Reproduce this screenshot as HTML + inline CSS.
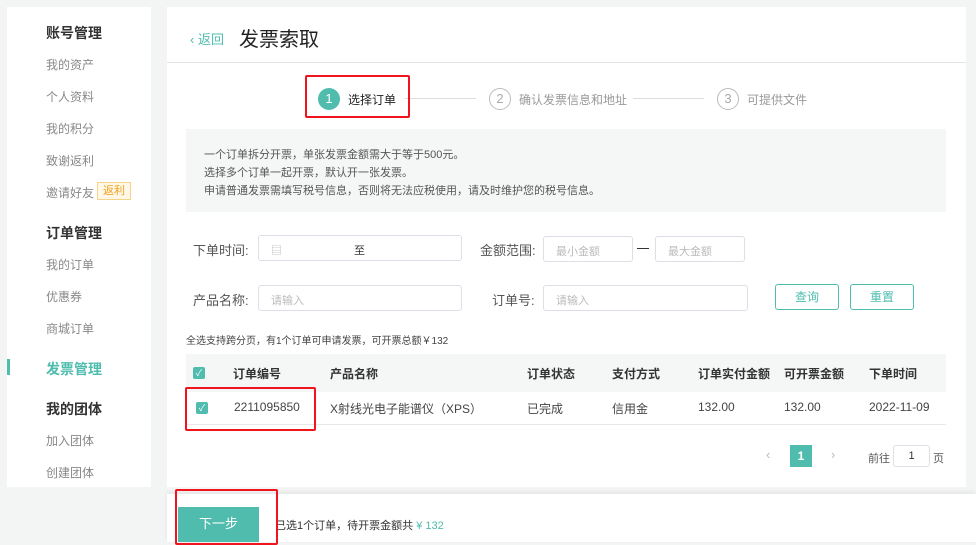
<!DOCTYPE html>
<html><head><meta charset="utf-8"><style>
*{margin:0;padding:0;box-sizing:border-box}
body{width:976px;height:542px;background:#f3f4f4;font-family:"Liberation Sans","Noto Sans CJK SC",sans-serif;position:relative;overflow:hidden;color:#333}
.a{position:absolute;white-space:nowrap}
.side{left:7px;top:7px;width:144px;height:480px;background:#fff}
.main{left:167px;top:7px;width:799px;height:480px;background:#fff}
.h{font-size:14px;font-weight:bold;color:#333}
.s{font-size:12px;color:#888}
.inp{position:absolute;border:1px solid #dcdfe6;border-radius:3px;height:26px;background:#fff;font-size:11px;color:#bbb;padding:6px 12px}
.lbl{font-size:13px;color:#555}
.btn{position:absolute;border:1px solid #4fbcae;color:#4fbcae;border-radius:3px;font-size:12px;text-align:center;line-height:24px;height:26px;width:64px}
.red{position:absolute;border:2px solid #f0141e;border-radius:2px}
.cb{position:absolute;width:12px;height:12px;background:#4fbcae;border-radius:2px;color:#fff;font-size:9px;line-height:12px;text-align:center}
.th{font-size:12px;color:#333;font-weight:bold}
.td{font-size:12px;color:#444}
</style></head><body>
<div class="a side"></div>
<div class="a h" style="left:46px;top:23px">账号管理</div>
<div class="a s" style="left:46px;top:56px">我的资产</div>
<div class="a s" style="left:46px;top:88px">个人资料</div>
<div class="a s" style="left:46px;top:120px">我的积分</div>
<div class="a s" style="left:46px;top:152px">致谢返利</div>
<div class="a s" style="left:46px;top:184px">邀请好友</div>
<div class="a" style="left:97px;top:182px;width:34px;height:18px;border:1px solid #f5d48a;background:#fff8e6;color:#f0a020;font-size:11px;text-align:center;line-height:16px">返利</div>
<div class="a h" style="left:46px;top:223px">订单管理</div>
<div class="a s" style="left:46px;top:256px">我的订单</div>
<div class="a s" style="left:46px;top:288px">优惠券</div>
<div class="a s" style="left:46px;top:320px">商城订单</div>
<div class="a" style="left:7px;top:359px;width:3px;height:16px;background:#4fbcae"></div>
<div class="a" style="left:46px;top:359px;font-size:14px;font-weight:bold;color:#4fbcae">发票管理</div>
<div class="a h" style="left:46px;top:399px">我的团体</div>
<div class="a s" style="left:46px;top:432px">加入团体</div>
<div class="a s" style="left:46px;top:464px">创建团体</div>

<div class="a main"></div>
<div class="a" style="left:190px;top:29px;font-size:13px;color:#4fbcae">‹ 返回</div>
<div class="a" style="left:239px;top:23px;font-size:20px;color:#222">发票索取</div>
<div class="a" style="left:167px;top:62px;width:799px;height:1px;background:#e5e5e5"></div>

<div class="a" style="left:318px;top:88px;width:22px;height:22px;border-radius:50%;background:#4fbcae;color:#fff;font-size:13px;text-align:center;line-height:22px">1</div>
<div class="a" style="left:348px;top:91px;font-size:12px;color:#222">选择订单</div>
<div class="a" style="left:405px;top:98px;width:71px;height:1px;background:#ddd"></div>
<div class="a" style="left:489px;top:88px;width:22px;height:22px;border-radius:50%;border:1px solid #bbb;color:#aaa;font-size:13px;text-align:center;line-height:20px">2</div>
<div class="a" style="left:519px;top:91px;font-size:12px;color:#999">确认发票信息和地址</div>
<div class="a" style="left:633px;top:98px;width:71px;height:1px;background:#ddd"></div>
<div class="a" style="left:717px;top:88px;width:22px;height:22px;border-radius:50%;border:1px solid #bbb;color:#aaa;font-size:13px;text-align:center;line-height:20px">3</div>
<div class="a" style="left:747px;top:91px;font-size:12px;color:#999">可提供文件</div>
<div class="red" style="left:305px;top:75px;width:105px;height:43px"></div>

<div class="a" style="left:186px;top:129px;width:760px;height:83px;background:#f5f7f6"></div>
<div class="a" style="left:204px;top:146px;font-size:11px;color:#555;line-height:18px">一个订单拆分开票，单张发票金额需大于等于500元。<br>选择多个订单一起开票，默认开一张发票。<br>申请普通发票需填写税号信息，否则将无法应税使用，请及时维护您的税号信息。</div>

<div class="a lbl" style="left:193px;top:240px">下单时间:</div>
<div class="inp" style="left:258px;top:235px;width:204px">▤<span style="position:absolute;left:95px;color:#333">至</span></div>
<div class="a lbl" style="left:480px;top:240px">金额范围:</div>
<div class="inp" style="left:543px;top:236px;width:90px">最小金额</div>
<div class="a" style="left:637px;top:248px;width:12px;height:1px;background:#333"></div>
<div class="inp" style="left:655px;top:236px;width:90px">最大金额</div>
<div class="a lbl" style="left:193px;top:290px">产品名称:</div>
<div class="inp" style="left:258px;top:285px;width:204px">请输入</div>
<div class="a lbl" style="left:492px;top:290px">订单号:</div>
<div class="inp" style="left:543px;top:285px;width:205px">请输入</div>
<div class="btn" style="left:775px;top:284px">查询</div>
<div class="btn" style="left:850px;top:284px">重置</div>
<div class="a" style="left:186px;top:332px;font-size:10px;color:#444">全选支持跨分页，有1个订单可申请发票，可开票总额￥132</div>

<div class="a" style="left:186px;top:354px;width:760px;height:38px;background:#f5f7f6"></div>
<div class="cb" style="left:193px;top:367px">✓</div>
<div class="a th" style="left:233px;top:365px">订单编号</div>
<div class="a th" style="left:330px;top:365px">产品名称</div>
<div class="a th" style="left:527px;top:365px">订单状态</div>
<div class="a th" style="left:612px;top:365px">支付方式</div>
<div class="a th" style="left:698px;top:365px">订单实付金额</div>
<div class="a th" style="left:784px;top:365px">可开票金额</div>
<div class="a th" style="left:869px;top:365px">下单时间</div>
<div class="a" style="left:186px;top:424px;width:760px;height:1px;background:#e8e8e8"></div>
<div class="cb" style="left:196px;top:402px">✓</div>
<div class="a td" style="left:234px;top:400px">2211095850</div>
<div class="a td" style="left:330px;top:400px">X射线光电子能谱仪（XPS）</div>
<div class="a td" style="left:527px;top:400px">已完成</div>
<div class="a td" style="left:612px;top:400px">信用金</div>
<div class="a td" style="left:698px;top:400px">132.00</div>
<div class="a td" style="left:784px;top:400px">132.00</div>
<div class="a td" style="left:869px;top:400px">2022-11-09</div>
<div class="red" style="left:185px;top:387px;width:131px;height:44px"></div>

<div class="a" style="left:766px;top:447px;color:#bbb;font-size:13px">‹</div>
<div class="a" style="left:790px;top:445px;width:22px;height:22px;background:#4fbcae;color:#fff;font-size:12px;font-weight:bold;text-align:center;line-height:22px">1</div>
<div class="a" style="left:831px;top:447px;color:#bbb;font-size:13px">›</div>
<div class="a" style="left:868px;top:450px;font-size:11px;color:#555">前往</div>
<div class="a" style="left:893px;top:445px;width:37px;height:22px;border:1px solid #dcdfe6;border-radius:3px;font-size:11px;text-align:center;line-height:20px">1</div>
<div class="a" style="left:933px;top:450px;font-size:11px;color:#555">页</div>

<div class="a" style="left:167px;top:494px;width:809px;height:48px;background:#fff;box-shadow:0 -2px 4px rgba(0,0,0,.06)"></div>
<div class="a" style="left:178px;top:507px;width:81px;height:35px;background:#4fbcae;color:#fff;font-size:13px;text-align:center;line-height:33px">下一步</div>
<div class="a" style="left:275px;top:517px;font-size:11px;color:#333">已选1个订单，待开票金额共 <span style="color:#4fbcae">¥ 132</span></div>
<div class="red" style="left:175px;top:489px;width:103px;height:56px"></div>
</body></html>
